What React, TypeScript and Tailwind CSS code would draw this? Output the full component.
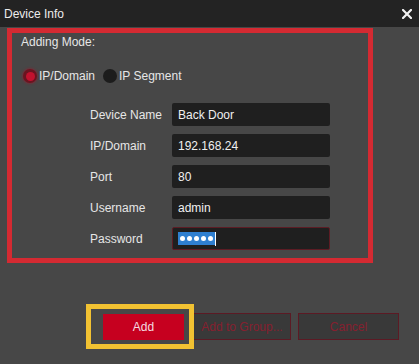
import React from "react";

const rows: { label: string; value: string }[] = [
  { label: "Device Name", value: "Back Door" },
  { label: "IP/Domain", value: "192.168.24" },
  { label: "Port", value: "80" },
  { label: "Username", value: "admin" },
];

export default function App() {
  return (
    <div
      className="relative w-[419px] h-[364px] bg-[#474747] text-[12px] overflow-hidden"
      style={{ fontFamily: '"Liberation Sans", Arial, sans-serif' }}
    >
      {/* title bar */}
      <div className="h-[27px] bg-[#232323] flex items-center justify-between pl-[4px] pr-[7px]">
        <span className="text-[#ececec] leading-[16px]">Device Info</span>
        <svg width="10" height="10" viewBox="0 0 10 10" className="mt-[1px]">
          <path d="M1 1 L9 9 M9 1 L1 9" stroke="#f2f2f2" strokeWidth="2.2" strokeLinecap="square" />
        </svg>
      </div>

      {/* red highlighted area */}
      <div className="ml-[7px] mt-[1px] w-[366px] h-[235px] border-[5px] border-[#d42a32] bg-[#474747]">
        <div className="pl-[9px] pt-[1px] leading-[16px] text-[#e6e6e6]">Adding Mode:</div>
        <div className="mt-[18px] ml-[11px] flex items-center h-[16px] text-[#e6e6e6]">
          <span className="w-[14px] h-[14px] rounded-full bg-[#6a1420] flex items-center justify-center shadow-[0_0_3px_#a0182c]">
            <span className="w-[9px] h-[9px] rounded-full bg-[#c2122e]" />
          </span>
          <span className="ml-[2px]">IP/Domain</span>
          <span className="ml-[8px] w-[14px] h-[14px] rounded-full bg-[#1c1c1c]" />
          <span className="ml-[2px]">IP Segment</span>
        </div>

        <div className="mt-[19px] flex flex-col gap-[8px]">
          {rows.map((r) => (
            <div key={r.label} className="flex items-center h-[23px]">
              <span className="w-[82px] pl-[78px] box-content text-[#e6e6e6] whitespace-nowrap">{r.label}</span>
              <div className="w-[158px] h-[23px] bg-[#1f1f1f] rounded-[2px] flex items-center pl-[6px] text-[#f0f0f0]">
                {r.value}
              </div>
            </div>
          ))}
          <div className="flex items-center h-[23px]">
            <span className="w-[82px] pl-[78px] box-content text-[#e6e6e6]">Password</span>
            <div className="w-[158px] h-[23px] bg-[#1f1f1f] rounded-[2px] border border-[#5c1c24] flex items-center pl-[5px]">
              <div className="h-[13px] bg-[#2f7fd0] flex items-center gap-[2px] px-[2px]">
                {[0, 1, 2, 3, 4].map((i) => (
                  <span key={i} className="w-[5px] h-[5px] rounded-full bg-white" />
                ))}
              </div>
              <span className="w-[1px] h-[14px] bg-white" />
            </div>
          </div>
        </div>
      </div>

      {/* buttons */}
      <div className="mt-[50px] ml-[103px] flex items-center">
        <div className="w-[81px] h-[26px] bg-[#c6001f] flex items-center justify-center text-[#f4dbe0]">Add</div>
        <div className="ml-[9px] w-[98px] h-[27px] bg-[#393939] border border-[#5c1a24] flex items-center justify-center text-[#86202f]">
          Add to Group...
        </div>
        <div className="ml-[7px] w-[101px] h-[27px] bg-[#393939] border border-[#5c1a24] flex items-center justify-center text-[#86202f]">
          Cancel
        </div>
      </div>

      {/* yellow highlight overlay */}
      <div className="absolute left-[86px] top-[304px] w-[108px] h-[45px] border-[5px] border-[#f2c232] pointer-events-none" />
    </div>
  );
}
